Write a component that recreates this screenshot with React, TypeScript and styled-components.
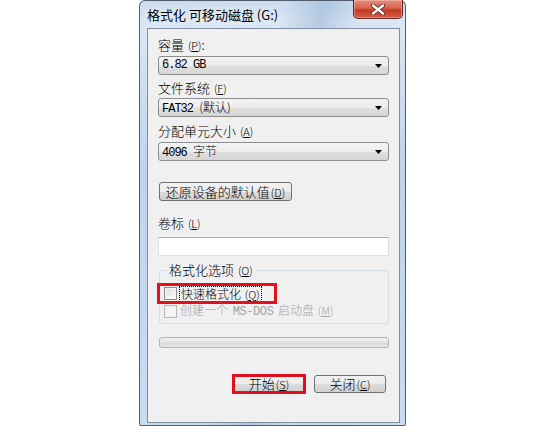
import styled, { createGlobalStyle } from "styled-components";

const GlobalStyle = createGlobalStyle`
	html, body {
		margin: 0;
		padding: 0;
		background: #ffffff;
	}
`;

const CJK = `"Noto Sans CJK SC", "Noto Sans", sans-serif`;
const MONO = `"Liberation Mono", "Noto Sans CJK SC", monospace`;

export default function App() {
	return (
		<Page>
			<GlobalStyle />
			<Window>
				<TitleBar>
					<Title>格式化 可移动磁盘 (G:)</Title>
					<CloseButton>
						<svg width="14" height="11" viewBox="0 0 14 11">
							<path d="M2 1.5 L12 9.5 M12 1.5 L2 9.5" stroke="#5a1f18" strokeWidth="4" strokeLinecap="round" />
							<path d="M2 1.5 L12 9.5 M12 1.5 L2 9.5" stroke="#ffffff" strokeWidth="2.4" strokeLinecap="round" />
						</svg>
					</CloseButton>
				</TitleBar>

				<Client>
					<FieldLabel $top={9}>
						容量 <Accel>(<u>P</u>)</Accel>:
					</FieldLabel>
					<Combo $top={4}>
						<ComboText>6.82 GB</ComboText>
						<Arrow />
					</Combo>

					<FieldLabel $top={6}>
						文件系统 <Accel>(<u>F</u>)</Accel>
					</FieldLabel>
					<Combo $top={3}>
						<ComboText>
							FAT32 <Cjk>(默认)</Cjk>
						</ComboText>
						<Arrow />
					</Combo>

					<FieldLabel $top={7}>
						分配单元大小 <Accel>(<u>A</u>)</Accel>
					</FieldLabel>
					<Combo $top={4}>
						<ComboText>
							4096 <Cjk>字节</Cjk>
						</ComboText>
						<Arrow />
					</Combo>

					<RestoreButton>
						还原设备的默认值 <Accel>(<u>D</u>)</Accel>
					</RestoreButton>

					<FieldLabel $top={15}>
						卷标 <Accel>(<u>L</u>)</Accel>
					</FieldLabel>
					<TextBox />

					<Group>
						<Legend>
							格式化选项 <Accel>(<u>O</u>)</Accel>
						</Legend>
						<CheckRow $height={21}>
							<CheckBox />
							<FocusText>
								快速格式化 <Accel>(<u>Q</u>)</Accel>
							</FocusText>
							<Highlight $left={-7} $width={120} />
						</CheckRow>
						<CheckRow $height={14} $disabled>
							<CheckBox $disabled />
							<span>
								创建一个 <Mono>MS-DOS</Mono> 启动盘 <Accel>(<u>M</u>)</Accel>
							</span>
						</CheckRow>
					</Group>

					<Progress />

					<ButtonRow>
						<Marked>
							<PushButton>
								开始 <Accel>(<u>S</u>)</Accel>
							</PushButton>
							<Highlight $left={-1} $width={74} $top={-1} $height={20} />
						</Marked>
						<PushButton>
							关闭 <Accel>(<u>C</u>)</Accel>
						</PushButton>
					</ButtonRow>
				</Client>
			</Window>
		</Page>
	);
}

function Arrow() {
	return (
		<ArrowIcon width="7" height="4" viewBox="0 0 7 4">
			<path d="M0 0 H7 L3.5 4 Z" fill="#000" />
		</ArrowIcon>
	);
}

const Page = styled.div`
	width: 560px;
	height: 441px;
	padding-left: 139px;
	box-sizing: border-box;
	background: #ffffff;
`;

const Window = styled.div`
	position: relative;
	width: 267px;
	height: 426px;
	box-sizing: border-box;
	display: flex;
	flex-direction: column;
	padding: 0 5px 2px 7px;
	border: 1px solid rgba(40, 50, 65, 0.75);
	border-radius: 6px 6px 2px 2px;
	background:
		linear-gradient(100deg, rgba(255, 255, 255, 0) 42%, rgba(150, 180, 212, 0.55) 54%, rgba(255, 255, 255, 0) 66%),
		linear-gradient(180deg, #cbdcee 0%, #dbe7f4 5%, #bfd4eb 40%, #c9dcf0 100%);
`;

const TitleBar = styled.div`
	height: 27px;
	display: flex;
	align-items: center;
`;

const Title = styled.span`
	font-family: ${CJK};
	font-size: 13px;
	color: #000;
	text-shadow: 0 0 6px rgba(255, 255, 255, 0.9);
	margin-top: -1px;
`;

const CloseButton = styled.div`
	position: absolute;
	top: -1px;
	right: 2px;
	width: 50px;
	height: 19px;
	box-sizing: border-box;
	display: flex;
	align-items: center;
	justify-content: center;
	border: 1px solid #5b2a25;
	border-top: none;
	border-radius: 0 0 5px 5px;
	background: linear-gradient(180deg, #e3907f 0%, #d36450 45%, #c13a25 55%, #d65c42 100%);
	box-shadow: inset 0 0 0 1px rgba(255, 200, 190, 0.45);
`;

const Client = styled.div`
	flex: 1;
	display: flex;
	flex-direction: column;
	padding: 0 10px 0 10px;
	border: 1px solid #7f8d9c;
	background: #f0f0f0;
	font-family: ${CJK};
	font-size: 13px;
	font-weight: 300;
	color: #000;
`;

const FieldLabel = styled.div<{ $top: number }>`
	margin-top: ${(p) => p.$top}px;
	height: 14px;
	line-height: 14px;
	white-space: nowrap;
`;

const Accel = styled.span`
	font-size: 11px;
	margin-left: 1px;

	u {
		text-underline-offset: 1px;
	}
`;

const Mono = styled.span`
	font-family: ${MONO};
	font-size: 12px;
	letter-spacing: -0.4px;
	margin: 0 2px;
`;

const Cjk = styled.span`
	font-family: ${CJK};
	font-size: 12px;
	letter-spacing: 0;
`;

const Combo = styled.div<{ $top: number }>`
	margin-top: ${(p) => p.$top}px;
	height: 19px;
	box-sizing: border-box;
	display: flex;
	align-items: center;
	padding: 0 4px 0 3px;
	border: 1px solid #8d8d8d;
	border-radius: 3px;
	background: linear-gradient(180deg, #f4f4f4 0%, #ececec 50%, #dfdfdf 51%, #d6d6d6 100%);
`;

const ComboText = styled.span`
	flex: 1;
	font-family: ${MONO};
	font-size: 12px;
	letter-spacing: -1px;
	line-height: 17px;
	white-space: nowrap;
`;

const ArrowIcon = styled.svg`
	margin-right: 2px;
`;

const RestoreButton = styled.div`
	margin: 21px 0 0 1px;
	width: 133px;
	height: 19px;
	box-sizing: border-box;
	display: flex;
	align-items: center;
	justify-content: center;
	border: 1px solid #707070;
	border-radius: 3px;
	background: linear-gradient(180deg, #f2f2f2 0%, #ebebeb 50%, #dddddd 51%, #cfcfcf 100%);
	white-space: nowrap;
	line-height: 14px;
`;

const TextBox = styled.div`
	margin-top: 7px;
	height: 19px;
	box-sizing: border-box;
	background: #ffffff;
	border: 1px solid #dbdfe6;
	border-top-color: #abadb3;
	border-radius: 1px;
`;

const Group = styled.fieldset`
	margin: 7px 0 0 1px;
	padding: 6px 4px 5px 4px;
	min-width: 0;
	border: 1px solid #d5dfe5;
	border-radius: 3px;
	display: flex;
	flex-direction: column;
`;

const Legend = styled.legend`
	margin-left: 3px;
	padding: 0 2px;
	height: 14px;
	line-height: 14px;
	white-space: nowrap;
`;

const CheckRow = styled.div<{ $height: number; $disabled?: boolean }>`
	position: relative;
	height: ${(p) => p.$height}px;
	display: flex;
	align-items: center;
	gap: 3px;
	white-space: nowrap;
	font-size: 12px;
	line-height: 13px;
	color: ${(p) => (p.$disabled ? "#a3a3a3" : "#000")};
`;

const CheckBox = styled.span<{ $disabled?: boolean }>`
	flex: none;
	width: 13px;
	height: 13px;
	box-sizing: border-box;
	border: 1px solid ${(p) => (p.$disabled ? "#b9b9b9" : "#8f8f8f")};
	background: ${(p) =>
		p.$disabled
			? "#f4f4f4"
			: "linear-gradient(135deg, #dcdcdc 0%, #f4f4f4 70%, #ffffff 100%)"};
	box-shadow: inset 0 0 0 1px ${(p) => (p.$disabled ? "#f0f0f0" : "#f4f4f4")};
`;

const FocusText = styled.span`
	outline: 1px dotted #000;
	outline-offset: 0;
	padding: 0 1px;
`;

const Highlight = styled.span<{ $left: number; $width: number; $top?: number; $height?: number }>`
	position: absolute;
	left: ${(p) => p.$left}px;
	top: ${(p) => p.$top ?? 0}px;
	width: ${(p) => p.$width}px;
	height: ${(p) => p.$height ?? 21}px;
	box-sizing: border-box;
	border: 3px solid #e2101c;
	pointer-events: none;
`;

const Progress = styled.div`
	margin: 13px 0 0 1px;
	height: 11px;
	box-sizing: border-box;
	border: 1px solid #b4b4b4;
	border-radius: 3px;
	background: linear-gradient(180deg, #f3f3f3 0%, #e4e4e4 45%, #d8d8d8 55%, #e8e8e8 100%);
`;

const ButtonRow = styled.div`
	margin-top: 27px;
	display: flex;
	justify-content: flex-end;
	gap: 9px;
	padding-right: 3px;
`;

const Marked = styled.div`
	position: relative;
	display: flex;
`;

const PushButton = styled.div`
	width: 72px;
	height: 18px;
	box-sizing: border-box;
	display: flex;
	align-items: center;
	justify-content: center;
	border: 1px solid #707070;
	border-radius: 3px;
	background: linear-gradient(180deg, #f2f2f2 0%, #ebebeb 50%, #dddddd 51%, #cfcfcf 100%);
	white-space: nowrap;
	line-height: 14px;
`;
